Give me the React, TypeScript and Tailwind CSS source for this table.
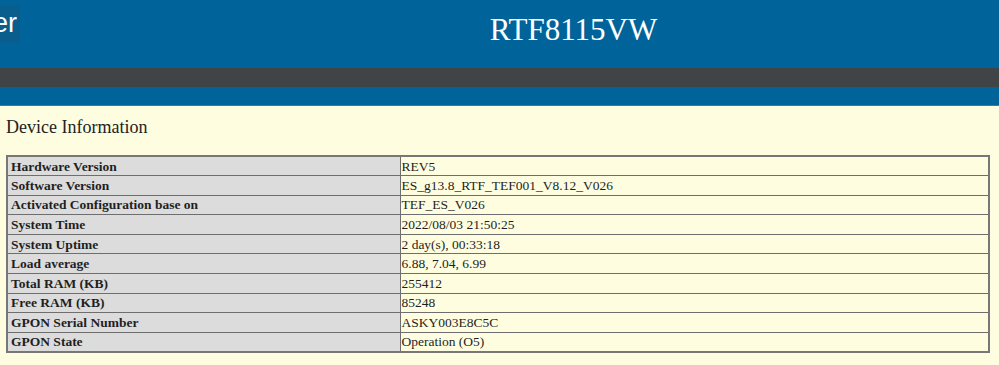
const rows: [string, string][] = [
  ["Hardware Version", "REV5"],
  ["Software Version", "ES_g13.8_RTF_TEF001_V8.12_V026"],
  ["Activated Configuration base on", "TEF_ES_V026"],
  ["System Time", "2022/08/03 21:50:25"],
  ["System Uptime", "2 day(s), 00:33:18"],
  ["Load average", "6.88, 7.04, 6.99"],
  ["Total RAM (KB)", "255412"],
  ["Free RAM (KB)", "85248"],
  ["GPON Serial Number", "ASKY003E8C5C"],
  ["GPON State", "Operation (O5)"],
];

export default function App() {
  return (
    <div className="min-h-[365px] w-[999px] bg-[#fefde0] font-['Liberation_Serif',serif]">
      <header className="bg-[#00649a]">
        <div className="relative flex h-[68px] items-center">
          {/* logo, cut off by the left edge of the window */}
          <div className="absolute left-0 top-[5px] h-[38px] w-[20px] overflow-hidden bg-[#0a5e8e]">
            <span className="absolute left-[-7px] top-[5px] font-['Liberation_Sans',sans-serif] text-[27px] leading-[27px] text-white">
              er
            </span>
          </div>
          <h1 className="w-full pb-[10px] pl-[148px] text-center text-[31px] leading-none text-white">RTF8115VW</h1>
        </div>
        <div className="h-[19px] bg-[#404446]" />
        <div className="h-[18px]" />
        <div className="h-px bg-[#2f7fa6]" />
      </header>

      <main className="px-[6px]">
        <h2 className="pt-[11px] text-[18px] leading-[20px] text-[#222]">Device Information</h2>
        <table className="mt-[18px] w-[984px] border-collapse border-2 border-[#777] text-[13.5px] text-[#1f1f1f]">
          <tbody>
            {rows.map(([label, value]) => (
              <tr key={label} className="h-[19.6px]">
                <td className="w-[393px] border border-[#6e6e6e] bg-[#dcdcdc] px-[3px] py-0 leading-[17px] font-bold">
                  {label}
                </td>
                <td className="border border-[#6e6e6e] px-[1px] py-0 leading-[17px]">{value}</td>
              </tr>
            ))}
          </tbody>
        </table>
      </main>
    </div>
  );
}
